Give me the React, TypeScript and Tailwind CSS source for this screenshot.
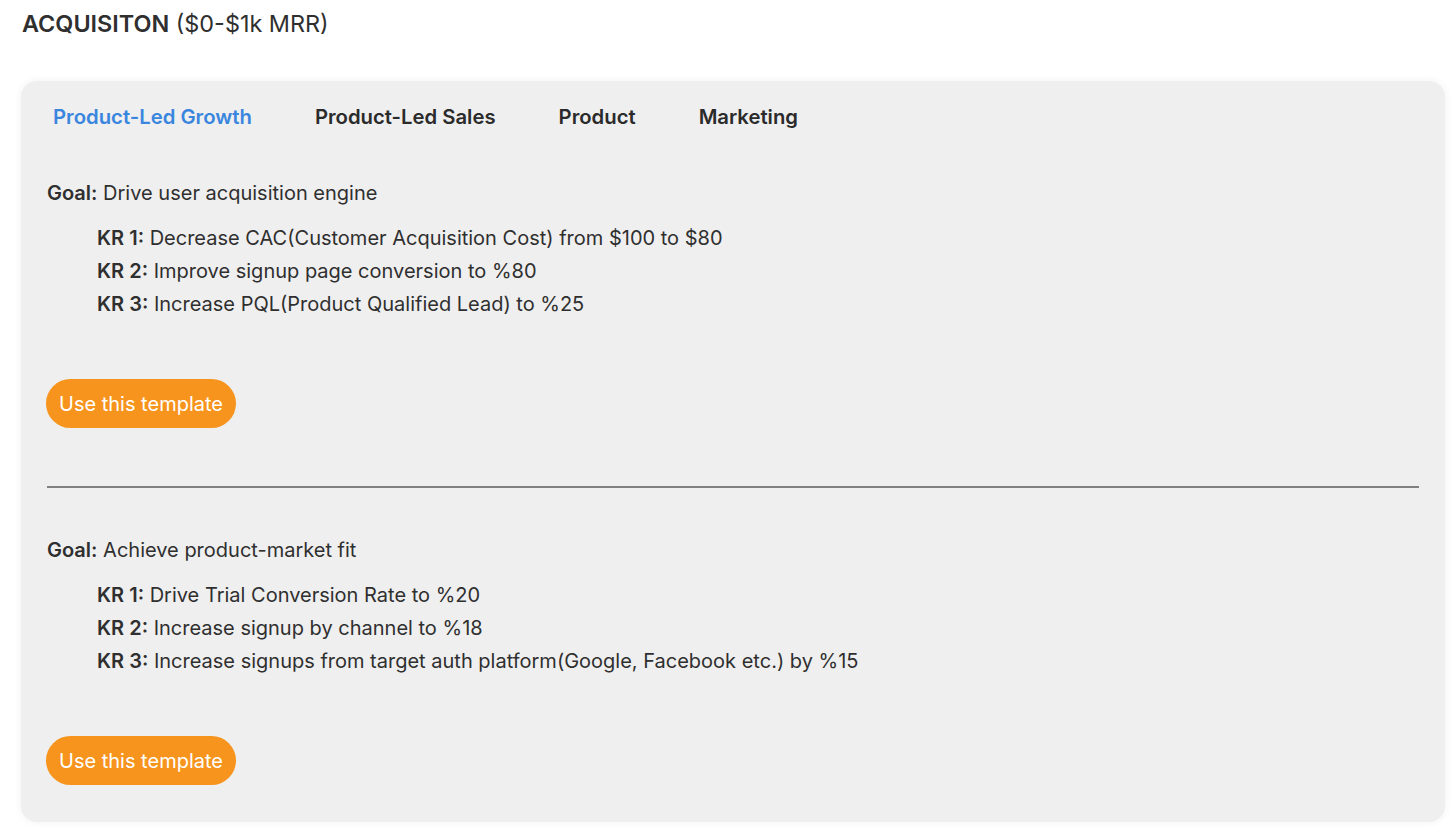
import React from "react";

const goals = [
  {
    goal: "Drive user acquisition engine",
    krs: [
      "Decrease CAC(Customer Acquisition Cost) from $100 to $80",
      "Improve signup page conversion to %80",
      "Increase PQL(Product Qualified Lead) to %25",
    ],
  },
  {
    goal: "Achieve product-market fit",
    krs: [
      "Drive Trial Conversion Rate to %20",
      "Increase signup by channel to %18",
      "Increase signups from target auth platform(Google, Facebook etc.) by %15",
    ],
  },
];

const tabs = ["Product-Led Growth", "Product-Led Sales", "Product", "Marketing"];

export default function App() {
  return (
    <div
      className="min-h-[836px] bg-white text-[#2f2f2f]"
      style={{ fontFamily: "Inter, 'Noto Sans', sans-serif" }}
    >
      <div className="pl-[22px] pt-[8px] text-[23.4px] leading-[32px]">
        <span className="font-semibold">ACQUISITON</span>{" "}
        <span className="font-normal">($0-$1k MRR)</span>
      </div>
      <div className="ml-[21px] mr-[10px] mt-[41px] rounded-[16px] bg-[#efefef] pb-[37px] shadow-[0_0_8px_rgba(0,0,0,0.06)]">
        <div className="flex gap-[63px] pl-[32px] pt-[22px] text-[20.3px] font-semibold leading-[28px]">
          {tabs.map((t, i) => (
            <div key={t} className={i === 0 ? "text-[#3a86de]" : "text-[#2b2b2b]"}>
              {t}
            </div>
          ))}
        </div>
        <div className="px-[26px] pt-[48px]">
          {goals.map((g, gi) => (
            <div key={gi}>
              {gi > 0 && <div className="mb-[48px] mt-[58px] h-[2px] bg-[#808080]" />}
              <div className="text-[20px] leading-[28px]">
                <span className="font-semibold">Goal:</span> {g.goal}
              </div>
              <div className="mt-[15px] pl-[50px] text-[20px] leading-[33px]">
                {g.krs.map((k, ki) => (
                  <div key={ki}>
                    <span className="font-semibold">KR {ki + 1}:</span> {k}
                  </div>
                ))}
              </div>
              <button className="-ml-[1px] mt-[58px] flex h-[49px] items-center rounded-full bg-[#f7941d] px-[13px] text-[20px] text-white">
                Use this template
              </button>
            </div>
          ))}
        </div>
      </div>
    </div>
  );
}
